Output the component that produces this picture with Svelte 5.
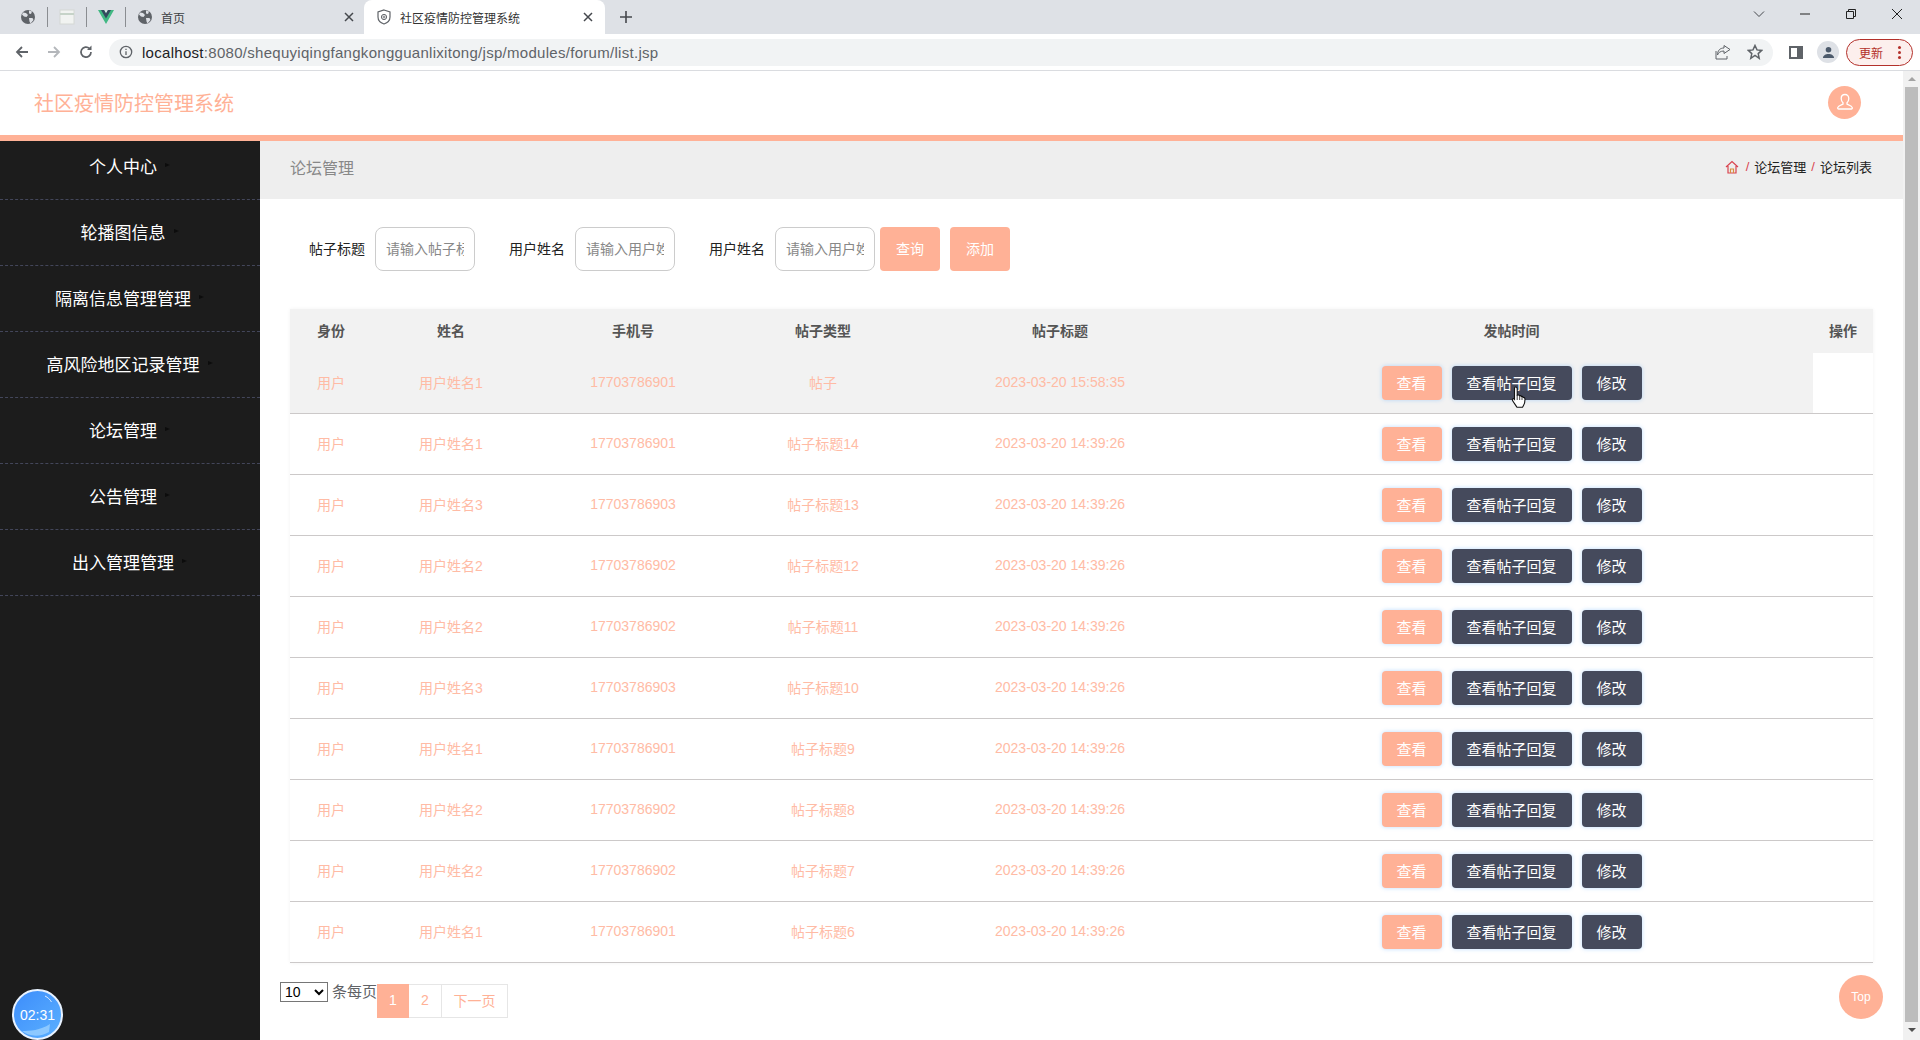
<script>
  const menu = ['个人中心', '轮播图信息', '隔离信息管理管理', '高风险地区记录管理', '论坛管理', '公告管理', '出入管理管理'];
  const columns = ['身份', '姓名', '手机号', '帖子类型', '帖子标题', '发帖时间', '操作'];
  const filters = [
    { label: '帖子标题', hint: '请输入帖子标题' },
    { label: '用户姓名', hint: '请输入用户姓名' },
    { label: '用户姓名', hint: '请输入用户姓名' }
  ];
  const rows = [
    ['用户姓名1', '17703786901', '帖子', '2023-03-20 15:58:35'],
    ['用户姓名1', '17703786901', '帖子标题14', '2023-03-20 14:39:26'],
    ['用户姓名3', '17703786903', '帖子标题13', '2023-03-20 14:39:26'],
    ['用户姓名2', '17703786902', '帖子标题12', '2023-03-20 14:39:26'],
    ['用户姓名2', '17703786902', '帖子标题11', '2023-03-20 14:39:26'],
    ['用户姓名3', '17703786903', '帖子标题10', '2023-03-20 14:39:26'],
    ['用户姓名1', '17703786901', '帖子标题9', '2023-03-20 14:39:26'],
    ['用户姓名2', '17703786902', '帖子标题8', '2023-03-20 14:39:26'],
    ['用户姓名2', '17703786902', '帖子标题7', '2023-03-20 14:39:26'],
    ['用户姓名1', '17703786901', '帖子标题6', '2023-03-20 14:39:26']
  ];
</script>

{#snippet globe()}
  <svg class="fav" viewBox="0 0 16 16"><circle cx="8" cy="8" r="7" fill="#5f6368"/><path d="M3 3.500l3 .5 2 2-1.500 2-2.500-.5-2-2zM9 1.500l3 1-1 2.500-2-.5zM9 9l3.500 0 1 2-3 3.500-1-2z" fill="#dee1e6"/></svg>
{/snippet}

{#snippet close()}
  <svg class="x" viewBox="0 0 10 10"><path d="M1 1l8 8M9 1l-8 8" stroke="#45484d" stroke-width="1.500" fill="none"/></svg>
{/snippet}

<div class="screen">
  <div class="tabs">
    <div class="pinned">{@render globe()}</div>
    <i class="sep"></i>
    <div class="pinned">
      <svg class="fav" viewBox="0 0 16 16"><rect x="1" y="1" width="14" height="14" fill="#f1f3f1" stroke="#d4d8d4"/><path d="M1 5h14" stroke="#c6d3c8" stroke-width="2"/></svg>
    </div>
    <i class="sep"></i>
    <div class="pinned">
      <svg class="fav" viewBox="0 0 16 16"><path d="M0 1h6l2 3.500L10 1h6L8 15z" fill="#41b883"/><path d="M3 1h3l2 3.500L10 1h3L8 9.500z" fill="#35495e"/></svg>
    </div>
    <i class="sep"></i>
    <div class="tab">
      {@render globe()}
      <span class="tab-title">首页</span>
      {@render close()}
    </div>
    <div class="tab active">
      <svg class="fav" viewBox="0 0 16 16"><path d="M8 1l6 2v5c0 3.500-3 6-6 7-3-1-6-3.500-6-7V3z" fill="none" stroke="#5f6368" stroke-width="1.200"/><circle cx="8" cy="8" r="2.600" fill="none" stroke="#5f6368"/><path d="M8 6.500v3M6.500 8h3" stroke="#5f6368" stroke-width=".8"/></svg>
      <span class="tab-title">社区疫情防控管理系统</span>
      {@render close()}
    </div>
    <svg class="plus" viewBox="0 0 12 12"><path d="M6 0v12M0 6h12" stroke="#45484d" stroke-width="1.600"/></svg>
    <div class="win">
      <svg viewBox="0 0 12 12"><path d="M1 3.500l5 5 5-5" stroke="#45484d" fill="none"/></svg>
      <svg viewBox="0 0 12 12"><path d="M1 6h10" stroke="#222" fill="none"/></svg>
      <svg viewBox="0 0 12 12"><path d="M1.500 3.500h7v7h-7zM3.500 3.500v-2h7v7h-2" stroke="#222" fill="none"/></svg>
      <svg viewBox="0 0 12 12"><path d="M1 1l10 10M11 1L1 11" stroke="#222" fill="none"/></svg>
    </div>
  </div>

  <div class="toolbar">
    <svg class="nav" viewBox="0 0 16 16"><path d="M14 8H3M8 3L3 8l5 5" stroke="#5f6368" stroke-width="1.800" fill="none"/></svg>
    <svg class="nav" viewBox="0 0 16 16"><path d="M2 8h11M8 3l5 5-5 5" stroke="#b4b7bb" stroke-width="1.800" fill="none"/></svg>
    <svg class="nav" viewBox="0 0 16 16"><path d="M13 8a5 5 0 1 1-1.500-3.500" stroke="#5f6368" stroke-width="1.700" fill="none"/><path d="M13.500 1.500v4.500H9z" fill="#5f6368"/></svg>
    <div class="address">
      <svg class="info" viewBox="0 0 16 16"><circle cx="8" cy="8" r="6.500" stroke="#5f6368" stroke-width="1.500" fill="none"/><path d="M8 7v4.500M8 4.300v1.500" stroke="#5f6368" stroke-width="1.500"/></svg>
      <span class="url"><b>localhost</b>:8080/shequyiqingfangkongguanlixitong/jsp/modules/forum/list.jsp</span>
      <svg class="share" viewBox="0 0 16 16"><path d="M9 1.500L15 5.500 9 9.500V7C5.500 7 3.500 8.500 2.500 11 2.500 6.500 5 4 9 4z" fill="none" stroke="#5f6368"/><path d="M1 7v8h11v-3" fill="none" stroke="#5f6368"/></svg>
      <svg class="star" viewBox="0 0 16 16"><path d="M8 1.500l2 4.400 4.700.5-3.500 3.200 1 4.700L8 11.500l-4.200 2.800 1-4.700L1.300 6.400 6 5.900z" fill="none" stroke="#5f6368" stroke-width="1.500"/></svg>
    </div>
    <svg class="panel-icon" viewBox="0 0 14 13"><rect width="14" height="13" fill="#5f6368"/><rect x="2" y="2" width="6" height="9" fill="#fff"/></svg>
    <div class="me">
      <svg viewBox="0 0 14 14"><circle cx="7" cy="4" r="3" fill="#4c5a6b"/><path d="M1 13c0-3 3-4.500 6-4.500s6 1.500 6 4.500z" fill="#4c5a6b"/></svg>
    </div>
    <div class="update"><span>更新</span><i class="dots"></i></div>
  </div>

  <div class="viewport">
    <div class="page">
      <header class="topbar">
        <div class="brand">社区疫情防控管理系统</div>
        <div class="avatar">
          <svg viewBox="0 0 20 20"><path d="M10 2.500c-2.400 0-3.800 1.800-3.800 4 0 1.800.8 3.400 1.800 4.300v1.400c-1.800.8-4.800 1.600-5.300 3.400-.2.800.3 1.400 1 1.400h12.600c.7 0 1.200-.6 1-1.400-.5-1.800-3.500-2.600-5.300-3.400v-1.400c1-.9 1.800-2.500 1.800-4.300 0-2.200-1.400-4-3.800-4z" fill="none" stroke="#fff" stroke-width="1.300"/></svg>
        </div>
      </header>

      <div class="body">
        <nav class="side">
          {#each menu as item}
            <div class="item"><span>{item}</span><i class="caret"></i></div>
          {/each}
        </nav>

        <main class="main">
          <div class="crumb">
            <span class="crumb-title">论坛管理</span>
            <div class="path">
              <svg class="home" viewBox="0 0 14 14"><path d="M1 7l6-5.500L13 7M3 6v7h8V6" fill="none" stroke="#d9434e" stroke-width="1.200"/><path d="M5.500 13V9h3v4" fill="none" stroke="#d9903e" stroke-width="1.200"/></svg>
              <em>/</em><span>论坛管理</span><em>/</em><span>论坛列表</span>
            </div>
          </div>

          <div class="filters">
            {#each filters as f}
              <label class="field">
                <span>{f.label}</span>
                <input placeholder={f.hint} />
              </label>
            {/each}
            <button class="btn orange big first">查询</button>
            <button class="btn orange big">添加</button>
          </div>

          <table>
            <colgroup>
              <col class="c1" /><col class="c2" /><col class="c3" /><col class="c4" /><col class="c5" /><col class="c6" /><col class="c7" />
            </colgroup>
            <thead>
              <tr>
                {#each columns as c}<th>{c}</th>{/each}
              </tr>
            </thead>
            <tbody>
              {#each rows as r, i}
                <tr class:hover={i === 0}>
                  <td>用户</td>
                  {#each r as v}<td>{v}</td>{/each}
                  <td>
                    <div class="ops">
                      <button class="btn orange">查看</button>
                      <button class="btn dark wide">查看帖子回复</button>
                      <button class="btn dark">修改</button>
                    </div>
                  </td>
                  <td class="blank"></td>
                </tr>
              {/each}
            </tbody>
          </table>

          <div class="pager">
            <select><option>10</option><option>20</option></select>
            <span class="per">条每页</span>
            <a class="on">1</a><a>2</a><a class="next">下一页</a>
          </div>
        </main>
      </div>

      <div class="timer">
        <svg viewBox="0 0 47 47">
          <path d="M31 5c3 1.500 5 3.500 6.500 6" stroke="#dcecff" stroke-width="1" fill="none"/>
          <path d="M8 40c8 0 18-.5 28-7l-1 8c-8 5-20 5-27-1z" fill="#8cc8ff"/>
        </svg>
        <span>02:31</span>
      </div>
      <div class="top">Top</div>
      <svg class="cursor" viewBox="0 0 18 24"><path d="M5.500 2c1 0 1.700.7 1.700 1.700v6.500l1-.2c.8-.1 1.300.3 1.500.7.700-.2 1.400.1 1.700.7.800-.2 1.500.2 1.800 1 .9 0 1.800.6 1.800 1.800 0 3-.5 4.700-1.500 6.300-.6 1-1 1.800-1 1.800H7c-1-1.700-2.500-3.500-4.500-6.800-.7-1.200.7-2.400 1.800-1.400l.2.200V3.700C4.500 2.700 4.700 2 5.500 2z" fill="#fff" stroke="#111" stroke-width="1.100"/><path d="M7.200 10v5M9.700 10.500V15M12 11.200V15" stroke="#111" stroke-width=".8"/></svg>
    </div>

    <div class="scrollbar">
      <i class="up"></i>
      <div class="thumb"></div>
      <i class="down"></i>
    </div>
  </div>
</div>

<style>
  :global(body) {
    margin: 0;
    overflow: hidden;
  }
  .screen {
    width: 1920px;
    height: 1040px;
    display: flex;
    flex-direction: column;
    overflow: hidden;
    font-family: "Liberation Sans", "Noto Sans CJK SC", sans-serif;
    font-size: 14px;
  }

  .tabs {
    height: 34px;
    background: #dee1e6;
    display: flex;
    align-items: center;
    padding-left: 9px;
    flex: none;
  }
  .pinned {
    width: 38px;
    display: flex;
    justify-content: center;
  }
  .sep {
    width: 1px;
    height: 20px;
    background: #8a8d91;
  }
  .fav {
    width: 16px;
    height: 16px;
    flex: none;
  }
  .tab {
    height: 34px;
    width: 238px;
    display: flex;
    align-items: center;
    padding: 0 10px 0 11px;
    box-sizing: border-box;
    font-size: 12px;
    color: #3c4043;
  }
  .tab .tab-title {
    margin-left: 8px;
    flex: 1;
  }
  .tab.active {
    width: 241px;
    background: #fff;
    border-radius: 8px 8px 0 0;
    padding: 0 12px;
    color: #333;
  }
  .x {
    width: 10px;
    height: 10px;
    flex: none;
  }
  .plus {
    width: 12px;
    height: 12px;
    margin-left: 15px;
  }
  .win {
    margin-left: auto;
    display: flex;
    gap: 34px;
    padding-right: 17px;
    align-items: center;
    margin-top: -6px;
  }
  .win svg {
    width: 12px;
    height: 12px;
  }

  .toolbar {
    height: 37px;
    box-sizing: border-box;
    border-bottom: 1px solid #dadce0;
    background: #fff;
    display: flex;
    align-items: center;
    padding-left: 14px;
    flex: none;
  }
  .nav {
    width: 16px;
    height: 16px;
    margin-right: 16px;
  }
  .address {
    width: 1664px;
    height: 27px;
    margin-left: -1px;
    background: #f1f3f4;
    border-radius: 14px;
    display: flex;
    align-items: center;
    padding: 0 10px;
    box-sizing: border-box;
  }
  .info {
    width: 14px;
    height: 14px;
    flex: none;
  }
  .url {
    margin-left: 9px;
    font-size: 15px;
    color: #5f6368;
    letter-spacing: 0.29px;
    flex: 1;
  }
  .url b {
    font-weight: 400;
    color: #202124;
  }
  .share,
  .star {
    width: 16px;
    height: 16px;
    flex: none;
  }
  .share {
    margin-right: 16px;
  }
  .panel-icon {
    width: 14px;
    height: 13px;
    margin-left: 16px;
  }
  .me {
    width: 22px;
    height: 22px;
    border-radius: 50%;
    background: #dee1e6;
    margin-left: 14px;
    display: flex;
    align-items: center;
    justify-content: center;
  }
  .me svg {
    width: 13px;
    height: 13px;
  }
  .update {
    width: 67px;
    height: 27px;
    margin-left: 7px;
    box-sizing: border-box;
    border: 1px solid #b3302a;
    border-radius: 14px;
    background: #fcefed;
    color: #b3302a;
    font-size: 12px;
    display: flex;
    align-items: center;
    padding-left: 12px;
  }
  .dots {
    width: 3px;
    height: 3px;
    margin-left: 15px;
    border-radius: 50%;
    background: #b3302a;
    box-shadow: 0 -5px #b3302a, 0 5px #b3302a;
  }

  .viewport {
    flex: 1;
    display: flex;
    min-height: 0;
  }
  .page {
    flex: 1;
    position: relative;
    display: flex;
    flex-direction: column;
    overflow: hidden;
  }
  .topbar {
    height: 70px;
    box-sizing: border-box;
    border-bottom: 6px solid #ffb196;
    display: flex;
    align-items: center;
    justify-content: space-between;
    padding: 0 42px 2px 34px;
    flex: none;
    background: #fff;
  }
  .brand {
    font-size: 20px;
    color: #ffb196;
  }
  .avatar {
    width: 33px;
    height: 33px;
    border-radius: 50%;
    background: #ffb196;
    display: flex;
    align-items: center;
    justify-content: center;
  }
  .avatar svg {
    width: 20px;
    height: 20px;
  }

  .body {
    flex: 1;
    display: flex;
    min-height: 0;
  }
  .side {
    width: 260px;
    flex: none;
    background: #1c1c1c;
  }
  .item {
    height: 66px;
    box-sizing: border-box;
    border-bottom: 1px dashed #43465a;
    color: #fff;
    font-size: 17px;
    padding-bottom: 2px;
    display: flex;
    align-items: center;
    justify-content: center;
  }
  .item:first-child {
    height: 59px;
    padding-bottom: 9px;
  }
  .caret {
    width: 14px;
    height: 7px;
    position: relative;
  }
  .caret::after {
    content: '';
    position: absolute;
    left: 8px;
    top: 1px;
    border-left: 5px solid #0c0c0c;
    border-top: 2px solid transparent;
    border-bottom: 2px solid transparent;
  }

  .main {
    flex: 1;
    min-width: 0;
    background: #fff;
  }
  .crumb {
    height: 58px;
    box-sizing: border-box;
    background: #eee;
    display: flex;
    align-items: center;
    justify-content: space-between;
    padding: 0 31px 7px 30px;
  }
  .crumb-title {
    font-size: 16px;
    color: #888;
  }
  .path {
    display: flex;
    align-items: center;
    font-size: 13px;
    color: #222;
  }
  .path em {
    font-style: normal;
    color: #d9434e;
    margin: 0 5px;
  }
  .home {
    width: 14px;
    height: 14px;
    margin-right: 2px;
  }

  .filters {
    display: flex;
    align-items: center;
    margin-top: 28px;
    padding-left: 49px;
    height: 44px;
  }
  .field {
    display: flex;
    align-items: center;
    gap: 10px;
    margin-right: 34px;
    color: #222;
  }
  .field span {
    padding-bottom: 2px;
  }
  .field:nth-child(3) {
    margin-right: 5px;
  }
  .field input {
    width: 100px;
    height: 44px;
    box-sizing: border-box;
    border: 1px solid #ccc;
    border-radius: 8px;
    padding: 0 10px 1px;
    font: inherit;
    outline: none;
  }
  .field input::placeholder {
    color: #888;
    opacity: 1;
  }
  .btn {
    width: 60px;
    height: 34px;
    border: none;
    border-radius: 4px;
    color: #fff;
    font: inherit;
    font-size: 15px;
    padding: 0 0 2px;
    box-shadow: 0 0 4px rgba(64, 158, 255, 0.35);
  }
  .btn.big {
    height: 44px;
    margin-left: 10px;
    font-size: 14px;
    box-shadow: none;
  }
  .btn.first {
    margin-left: 0;
  }
  .btn.wide {
    width: 120px;
  }
  .orange {
    background: #ffb196;
  }
  .dark {
    background: #454a5c;
  }

  table {
    width: 1583px;
    margin: 38px 0 0 30px;
    border-collapse: collapse;
    table-layout: fixed;
    box-shadow: 0 0 4px rgba(0, 0, 0, 0.05);
  }
  .c1 { width: 82px; }
  .c2 { width: 158px; }
  .c3 { width: 206px; }
  .c4 { width: 174px; }
  .c5 { width: 300px; }
  .c6 { width: 603px; }
  .c7 { width: 60px; }
  th {
    height: 42px;
    background: #f2f2f2;
    color: #555;
    font-size: 14px;
    padding: 0 0 2px;
  }
  td {
    height: 58px;
    padding: 0 0 2px;
    text-align: center;
    color: #ffbba5;
    border-bottom: 1px solid #ccc9c9;
  }
  tr.hover td {
    background: #f2f2f2;
  }
  tr.hover td.blank {
    background: #fff;
  }
  .ops {
    display: flex;
    justify-content: center;
    gap: 10px;
    margin-top: 2px;
  }

  .pager {
    display: flex;
    align-items: flex-start;
    margin: 19px 0 0 20px;
  }
  .pager select {
    width: 48px;
    height: 20px;
    font-size: 14px;
    font-family: inherit;
    background: #fff;
    padding: 0;
  }
  .per {
    color: #606266;
    font-size: 15px;
    margin-left: 4px;
    line-height: 20px;
  }
  .pager a {
    width: 33px;
    height: 34px;
    margin-top: 2px;
    padding-bottom: 2px;
    box-sizing: border-box;
    border: 1px solid #e6e6e6;
    border-left: none;
    color: #ffb196;
    display: flex;
    align-items: center;
    justify-content: center;
  }
  .pager a.on {
    background: #ffb196;
    color: #fff;
    border: none;
    width: 32px;
  }
  .pager a.next {
    width: 66px;
  }

  .timer {
    position: absolute;
    left: 12px;
    bottom: 0;
    width: 51px;
    height: 51px;
    box-sizing: border-box;
    border: 2px solid #e8f2ff;
    border-radius: 50%;
    overflow: hidden;
    background: linear-gradient(135deg, #3d8dfb, #5bb0ff);
    color: #fff;
    font-size: 14px;
    display: flex;
    align-items: center;
    justify-content: center;
  }
  .timer svg {
    position: absolute;
    inset: 0;
    width: 100%;
    height: 100%;
  }
  .timer span {
    position: relative;
  }
  .top {
    position: absolute;
    left: 1839px;
    top: 904px;
    width: 44px;
    height: 44px;
    border-radius: 50%;
    background: #ffb196;
    color: #fff;
    font-size: 12px;
    display: flex;
    align-items: center;
    justify-content: center;
  }
  .cursor {
    position: absolute;
    left: 1510px;
    top: 314px;
    width: 18px;
    height: 24px;
  }

  .scrollbar {
    width: 17px;
    flex: none;
    background: #f1f1f1;
    display: flex;
    flex-direction: column;
    align-items: center;
  }
  .thumb {
    width: 13px;
    flex: 1;
    background: #bcbcbc;
    margin: 6px 0;
  }
  .up,
  .down {
    margin-top: 6px;
    border-left: 4px solid transparent;
    border-right: 4px solid transparent;
  }
  .up {
    border-bottom: 4px solid #a3a3a3;
  }
  .down {
    margin: 0 0 8px;
    border-top: 4px solid #505050;
  }
</style>
